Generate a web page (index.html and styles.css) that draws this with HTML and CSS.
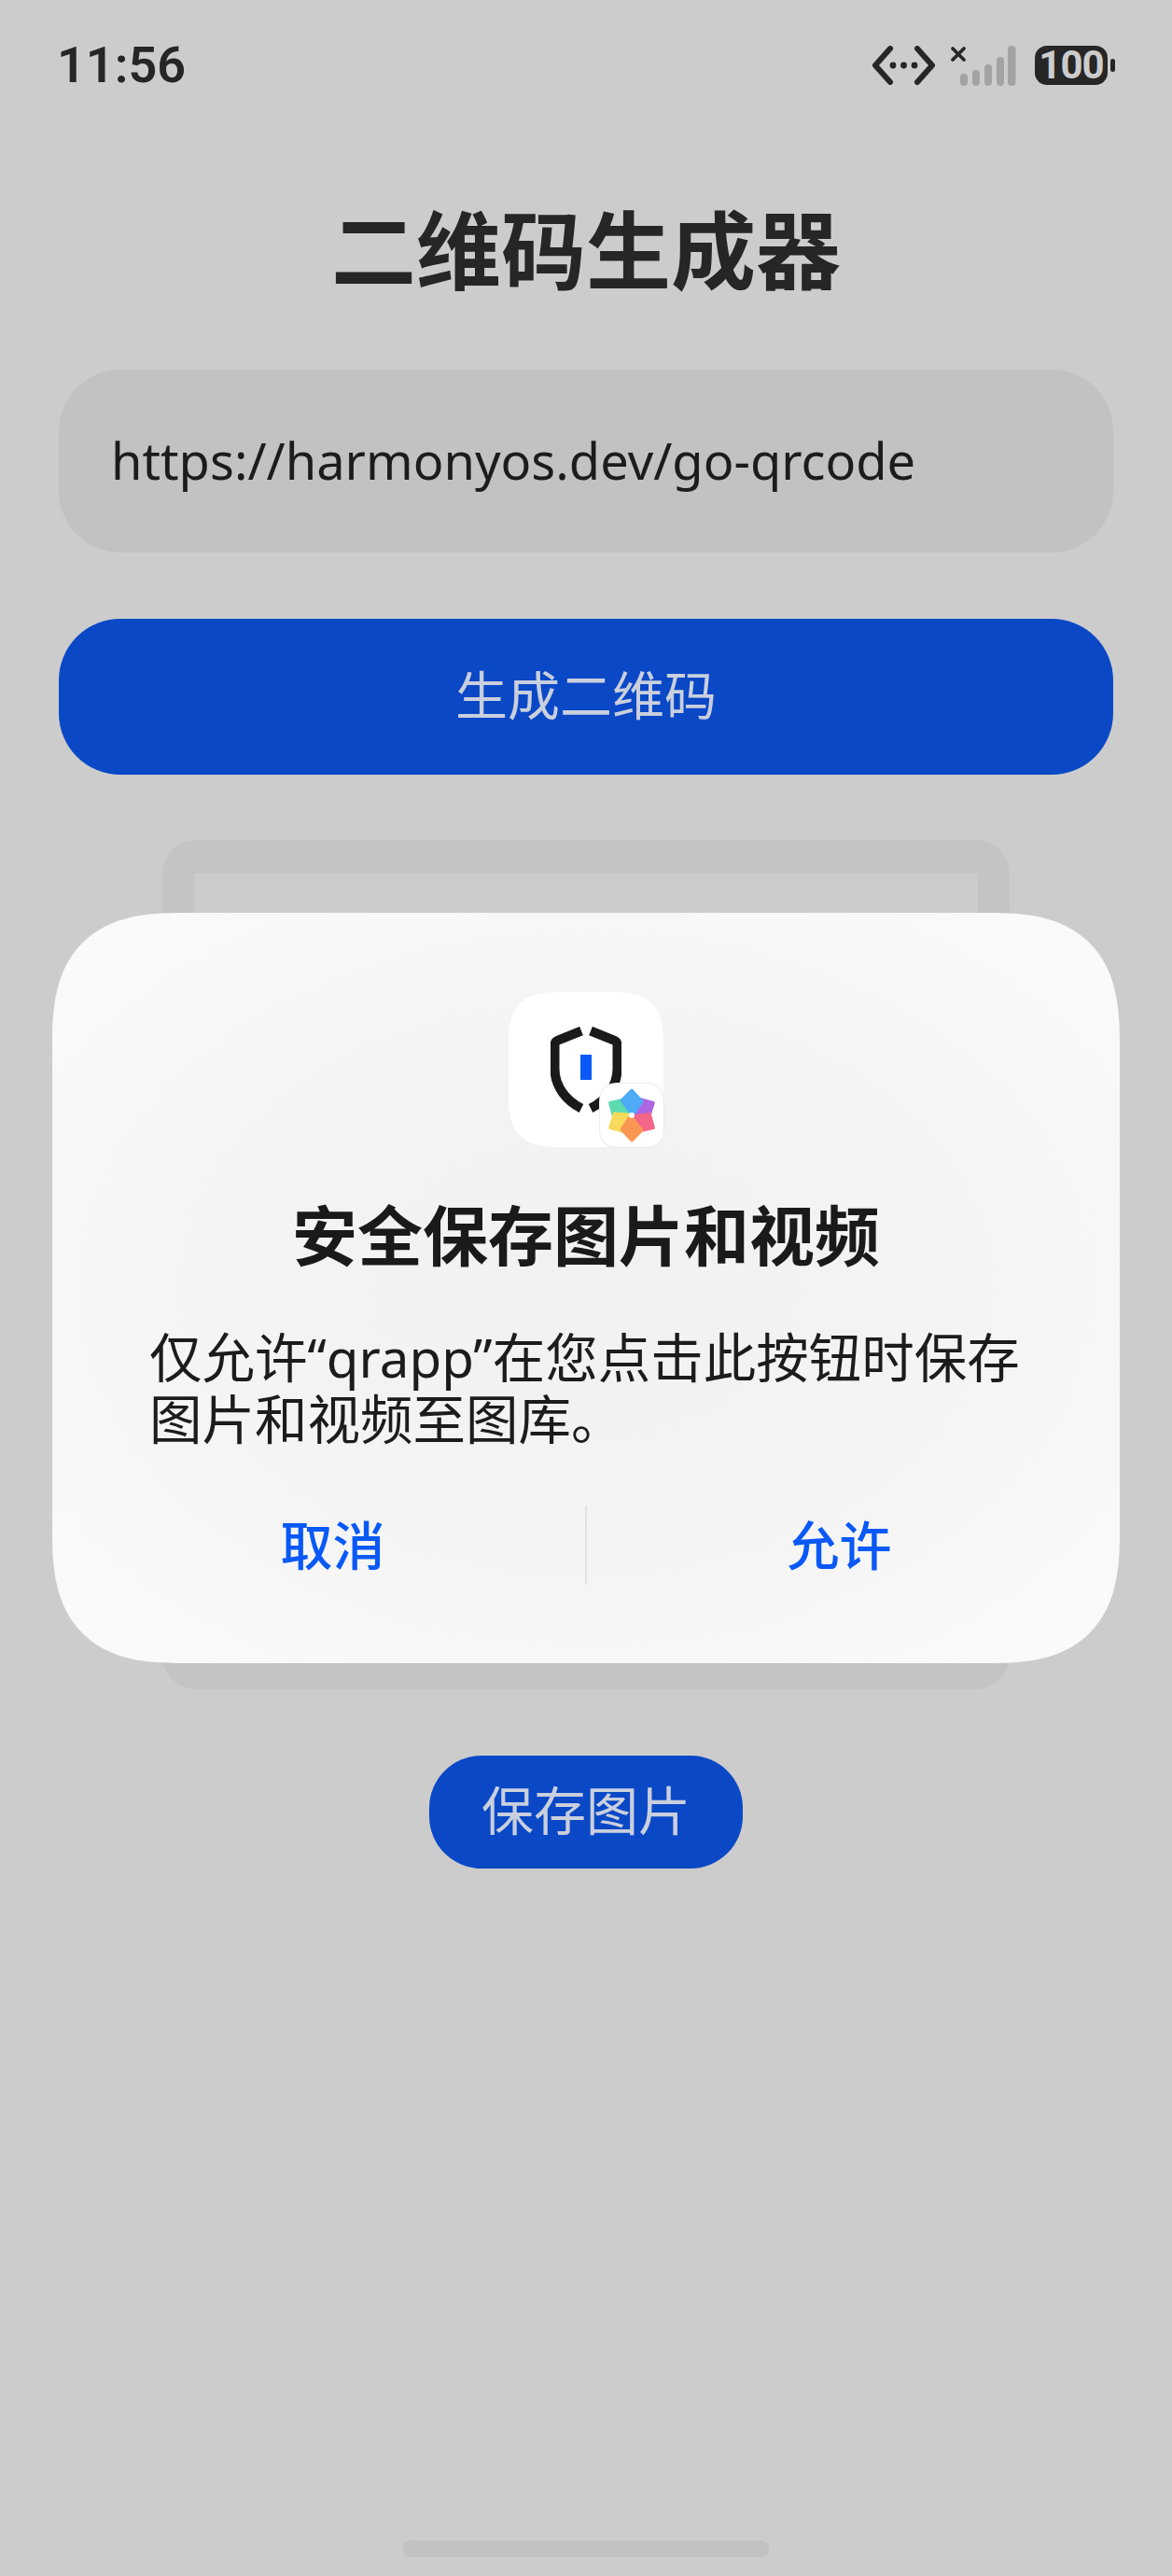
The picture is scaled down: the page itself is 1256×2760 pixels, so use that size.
FILE: index.html
```html
<!DOCTYPE html>
<html lang="zh-CN">
<head>
<meta charset="utf-8">
<title>二维码生成器</title>
<link rel="stylesheet" href="styles.css">
</head>
<body>
<div class="screen">
  <header class="status">
    <span class="time">11:56</span>
    <div class="status-icons">
      <svg class="net" viewBox="0 0 67 42" width="67" height="42"><path d="M19 3 3 21l16 18M48 3l16 18-16 18" fill="none" stroke="#262626" stroke-width="6" stroke-linecap="round" stroke-linejoin="round"/><circle cx="22" cy="21" r="3.4" fill="#262626"/><circle cx="33.500" cy="21" r="3.400" fill="#262626"/><circle cx="45" cy="21" r="3.400" fill="#262626"/></svg>
      <svg class="signal" viewBox="0 0 72 44" width="72" height="44"><path d="M2 3l12 12M14 3 2 15" stroke="#262626" stroke-width="3.600" stroke-linecap="round"/><g fill="#a3a3a3"><rect x="10" y="30" width="8" height="13" rx="4"/><rect x="23" y="26" width="8" height="17" rx="4"/><rect x="36" y="20" width="8" height="23" rx="4"/><rect x="49" y="12" width="8" height="31" rx="4"/><rect x="61" y="0" width="8.500" height="43" rx="4"/></g></svg>
      <div class="battery"><span class="battery-body">100</span><i class="battery-tip"></i></div>
    </div>
  </header>
  <h1 class="title">二维码生成器</h1>
  <div class="field">https://harmonyos.dev/go-qrcode</div>
  <div class="btn btn-wide">生成二维码</div>
  <div class="card"><div class="card-inner"></div></div>
  <div class="btn btn-small">保存图片</div>
  <div class="home"></div>

  <section class="dialog">
    <div class="tile">
      <svg class="shield" viewBox="0 0 76 92" width="76" height="92"><path d="M33 4.500 8 14.500Q4.500 16 4.500 20V45C4.500 65 18 80 33 87.500M43 4.500 68 14.500Q71.500 16 71.500 20V45C71.500 65 58 80 43 87.500" fill="none" stroke="#1a1a1a" stroke-width="10"/><rect x="32" y="30" width="12" height="27" fill="#0a59f7"/></svg>
      <div class="badge">
        <svg viewBox="-34 -34 68 68" width="68" height="68">
          <defs>
            <path id="petal" d="M0-27 11-15 3-3-1-3-11-16Z" stroke-width="3" stroke-linejoin="round"/>
          </defs>
          <g opacity=".92">
            <use href="#petal" fill="#a65be0" stroke="#a65be0" transform="rotate(60)"/>
            <use href="#petal" fill="#f4587e" stroke="#f4587e" transform="rotate(120)"/>
            <use href="#petal" fill="#4fd8a8" stroke="#4fd8a8" transform="rotate(300)"/>
            <use href="#petal" fill="#f6d94f" stroke="#f6d94f" transform="rotate(240)"/>
            <use href="#petal" fill="#f98f45" stroke="#f98f45" transform="rotate(180)"/>
            <use href="#petal" fill="#3ea6f5" stroke="#3ea6f5"/>
          </g>
          <circle r="3" fill="#fff"/>
        </svg>
      </div>
    </div>
    <h2 class="dialog-title">安全保存图片和视频</h2>
    <p class="dialog-text">仅允许“qrapp”在您点击此按钮时保存图片和视频至图库。</p>
    <div class="actions">
      <div class="action">取消</div>
      <i class="divider"></i>
      <div class="action">允许</div>
    </div>
  </section>
</div>
</body>
</html>
```
FILE: styles.css
```css
* { box-sizing: border-box; }
html, body { margin: 0; padding: 0; }
body {
  width: 1256px;
  height: 2760px;
  overflow: hidden;
  background: #cccccc;
  font-family: "Noto Sans", "Noto Sans CJK SC", sans-serif;
}
.screen {
  position: relative;
  width: 1256px;
  height: 2760px;
  display: flex;
  flex-direction: column;
  align-items: center;
  padding: 0 63px;
}
.status {
  align-self: stretch;
  height: 140px;
  padding-top: 40px;
  display: flex;
  justify-content: space-between;
  align-items: flex-start;
}
.time {
  margin-left: -2px;
  font: 600 54px/60px Roboto, sans-serif;
  color: #262626;
}
.status-icons {
  display: flex;
  align-items: flex-start;
  padding-top: 9px;
  margin-right: -2px;
}
.net { display: block; margin-right: 17px; }
.signal { display: block; margin-right: 18px; }
.battery { display: flex; align-items: center; }
.battery-body {
  width: 78px;
  height: 42px;
  border-radius: 13px;
  background: #262626;
  color: #cccccc;
  font: 700 42px/42px Roboto, sans-serif;
  letter-spacing: -1px;
  text-align: center;
}
.battery-tip {
  display: block;
  width: 5px;
  height: 14px;
  margin-left: 3px;
  border-radius: 3px;
  background: #262626;
}
.title {
  margin: 0;
  height: 256px;
  padding-top: 78px;
  font: 700 91px/91px "Noto Sans CJK SC", sans-serif;
  color: #262626;
  text-align: center;
}
.field {
  align-self: stretch;
  height: 196px;
  border-radius: 66px;
  background: #c2c2c2;
  padding-left: 56px;
  font-size: 54.200px;
  line-height: 194px;
  color: #1c1c1c;
}
.btn {
  display: flex;
  align-items: center;
  justify-content: center;
  padding-bottom: 9px;
  background: #0a48c6;
  color: #c9cfdd;
  font: 400 56px/1 "Noto Sans CJK SC", sans-serif;
}
.btn-wide {
  align-self: stretch;
  height: 167px;
  margin-top: 71px;
  border-radius: 66px;
}
.card {
  width: 908px;
  height: 910px;
  margin-top: 70px;
  padding: 36px 34px;
  border-radius: 36px;
  background: #c4c4c4;
}
.card-inner { height: 100%; background: #cccccc; }
.btn-small {
  width: 336px;
  height: 121px;
  margin-top: 71px;
  border-radius: 56px;
}
.home {
  position: absolute;
  left: 432px;
  top: 2722px;
  width: 392px;
  height: 18px;
  border-radius: 8px;
  background: #c2c2c2;
}
.dialog {
  position: absolute;
  left: 56px;
  top: 978px;
  width: 1144px;
  height: 804px;
  border-radius: 140px;
  corner-shape: superellipse(1.4);
  background: radial-gradient(ellipse at 50% 50%, #f1f1f1 0%, #f4f4f4 50%, #fbfbfb 100%);
  display: flex;
  flex-direction: column;
  align-items: center;
  padding-top: 85px;
}
.tile {
  position: relative;
  width: 166px;
  height: 166px;
  border-radius: 60px;
  corner-shape: superellipse(1.6);
  background: #ffffff;
  display: flex;
  justify-content: center;
  padding-top: 37px;
}
.shield { display: block; }
.badge {
  position: absolute;
  right: 0;
  bottom: 0;
  width: 68px;
  height: 68px;
  border-radius: 24px;
  corner-shape: superellipse(1.6);
  background: #ffffff;
  box-shadow: 0 0 0 1px #ececec;
}
.badge svg { display: block; }
.dialog-title {
  margin: 50px 0 0;
  font: 700 70px/84px "Noto Sans CJK SC", sans-serif;
  color: #1a1a1a;
}
.dialog-text {
  align-self: stretch;
  margin: 59px 0 0;
  padding: 0 96px 0 104px;
  font: 400 56.500px/66px "Noto Sans", "Noto Sans CJK SC", sans-serif;
  color: #1c1c1c;
}
.actions {
  align-self: stretch;
  height: 85px;
  margin-top: 59px;
  padding: 0 30px;
  display: flex;
  align-items: center;
}
.action {
  flex: 1;
  padding-bottom: 6px;
  text-align: center;
  font: 500 56px/79px "Noto Sans CJK SC", sans-serif;
  color: #0a59f7;
}
.divider {
  display: block;
  width: 2px;
  height: 85px;
  background: #e2e2e2;
}
```
